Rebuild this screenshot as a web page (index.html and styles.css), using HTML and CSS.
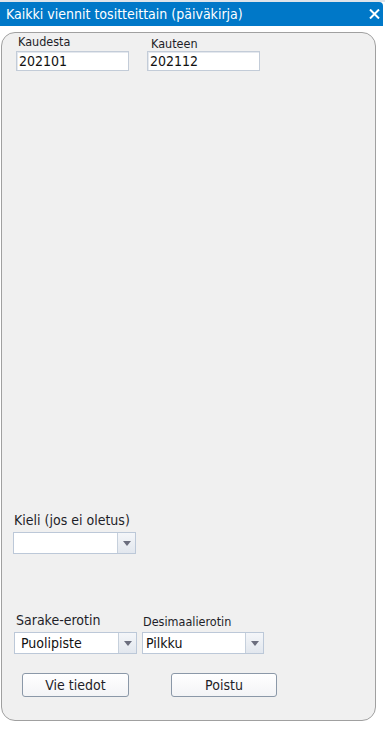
FILE: index.html
```html
<!DOCTYPE html>
<html lang="fi">
<head>
<meta charset="utf-8">
<title>Kaikki viennit tositteittain (päiväkirja)</title>
<link rel="stylesheet" href="styles.css">
</head>
<body>
<div class="window">
  <div class="titlebar">
    <span class="title">Kaikki viennit tositteittain (päiväkirja)</span>
    <svg class="close" width="11" height="10" viewBox="0 0 11 10"><path d="M1 0.5 L10 9.5 M10 0.5 L1 9.5" stroke="#fff" stroke-width="2" fill="none"/></svg>
  </div>
  <div class="panel">
    <div class="period-row">
      <div class="field">
        <div class="small-label">Kaudesta</div>
        <div class="textbox">202101</div>
      </div>
      <div class="field field-to">
        <div class="small-label">Kauteen</div>
        <div class="textbox">202112</div>
      </div>
    </div>
    <div class="lang">
      <div class="label">Kieli (jos ei oletus)</div>
      <div class="combo">
        <span class="combo-value"></span>
        <span class="combo-btn"><svg width="8" height="5" viewBox="0 0 8 5"><path d="M0 0 H8 L4 5 Z" fill="#6b6e7e"/></svg></span>
      </div>
    </div>
    <div class="sep-row">
      <div class="sep-col">
        <div class="label">Sarake-erotin</div>
        <div class="combo">
          <span class="combo-value">Puolipiste</span>
          <span class="combo-btn"><svg width="8" height="5" viewBox="0 0 8 5"><path d="M0 0 H8 L4 5 Z" fill="#6b6e7e"/></svg></span>
        </div>
      </div>
      <div class="sep-col">
        <div class="label label-small">Desimaalierotin</div>
        <div class="combo">
          <span class="combo-value">Pilkku</span>
          <span class="combo-btn"><svg width="8" height="5" viewBox="0 0 8 5"><path d="M0 0 H8 L4 5 Z" fill="#6b6e7e"/></svg></span>
        </div>
      </div>
    </div>
    <div class="buttons">
      <button class="btn btn-export">Vie tiedot</button>
      <button class="btn btn-close">Poistu</button>
    </div>
  </div>
</div>
</body>
</html>
```
FILE: styles.css
```css
* { box-sizing: border-box; }
html, body {
  margin: 0;
  padding: 0;
  background: #ffffff;
  font-family: "DejaVu Sans Condensed", "DejaVu Sans", sans-serif;
  color: #1e1e28;
}
.window {
  width: 385px;
  height: 729px;
  border-top: 2px solid #dfe4ea;
}
.titlebar {
  width: 383px;
  height: 24px;
  background: #0078c8;
  border-top-right-radius: 4px;
  display: flex;
  align-items: center;
  justify-content: space-between;
  padding: 0 3px 0 6px;
}
.title {
  color: #ffffff;
  font-size: 14px;
  line-height: 16px;
  white-space: nowrap;
}
.close {
  display: block;
}
.panel {
  margin: 6px 0 0 1px;
  width: 375px;
  height: 689px;
  border: 1px solid #a0a0a0;
  border-radius: 14px;
  background: #f0f0f0;
  display: flex;
  flex-direction: column;
}
.period-row {
  display: flex;
  padding: 2px 0 0 14px;
  gap: 18px;
}
.field {
  width: 113px;
  display: flex;
  flex-direction: column;
}
.small-label {
  font-size: 12.5px;
  line-height: 14px;
  height: 14px;
  padding-left: 2px;
}
.field-to .small-label {
  padding-left: 4px;
  margin-top: 2px;
}
.textbox {
  margin-top: 2px;
  height: 20px;
  background: #ffffff;
  border: 1px solid #c3ccd8;
  box-shadow: inset 1px 1px 0 #e4e8ee;
  font-size: 14px;
  line-height: 18px;
  padding-left: 2px;
  color: #111;
}
.field-to .textbox { margin-top: 0; }
.lang {
  margin-top: 441px;
  padding-left: 11px;
}
.label {
  font-size: 14px;
  line-height: 16px;
  height: 16px;
  padding-left: 1px;
  white-space: nowrap;
}
.combo {
  margin-top: 4px;
  width: 123px;
  height: 22px;
  display: flex;
  border: 1px solid #bcc8d8;
  background: #ffffff;
}
.combo-value {
  flex: 1;
  font-size: 14px;
  line-height: 20px;
  padding-left: 6px;
  color: #111;
  white-space: nowrap;
}
.combo-btn {
  width: 18px;
  border-left: 1px solid #c6d0dc;
  background: linear-gradient(#f4f6f9, #e2e7ee);
  display: flex;
  align-items: center;
  justify-content: center;
}
.sep-row {
  margin-top: 58px;
  padding-left: 12px;
  display: flex;
  gap: 5px;
}
.sep-col .label { padding-left: 2px; }
.label-small {
  font-size: 12.5px;
  padding-top: 2px;
}
.sep-col:last-child .label { padding-left: 1px; }
.sep-col:last-child .combo { width: 122px; }
.sep-col:last-child .combo-value { padding-left: 3px; }
.buttons {
  margin-top: 19px;
  padding-left: 20px;
  display: flex;
  gap: 42px;
}
.btn {
  width: 107px;
  height: 24px;
  border: 1px solid #8b98a8;
  border-radius: 3px;
  background: linear-gradient(#ffffff, #f3f4f6);
  font-family: "DejaVu Sans Condensed", "DejaVu Sans", sans-serif;
  font-size: 14px;
  color: #1e1e28;
  padding: 0;
}
.btn-close { width: 106px; }
```
